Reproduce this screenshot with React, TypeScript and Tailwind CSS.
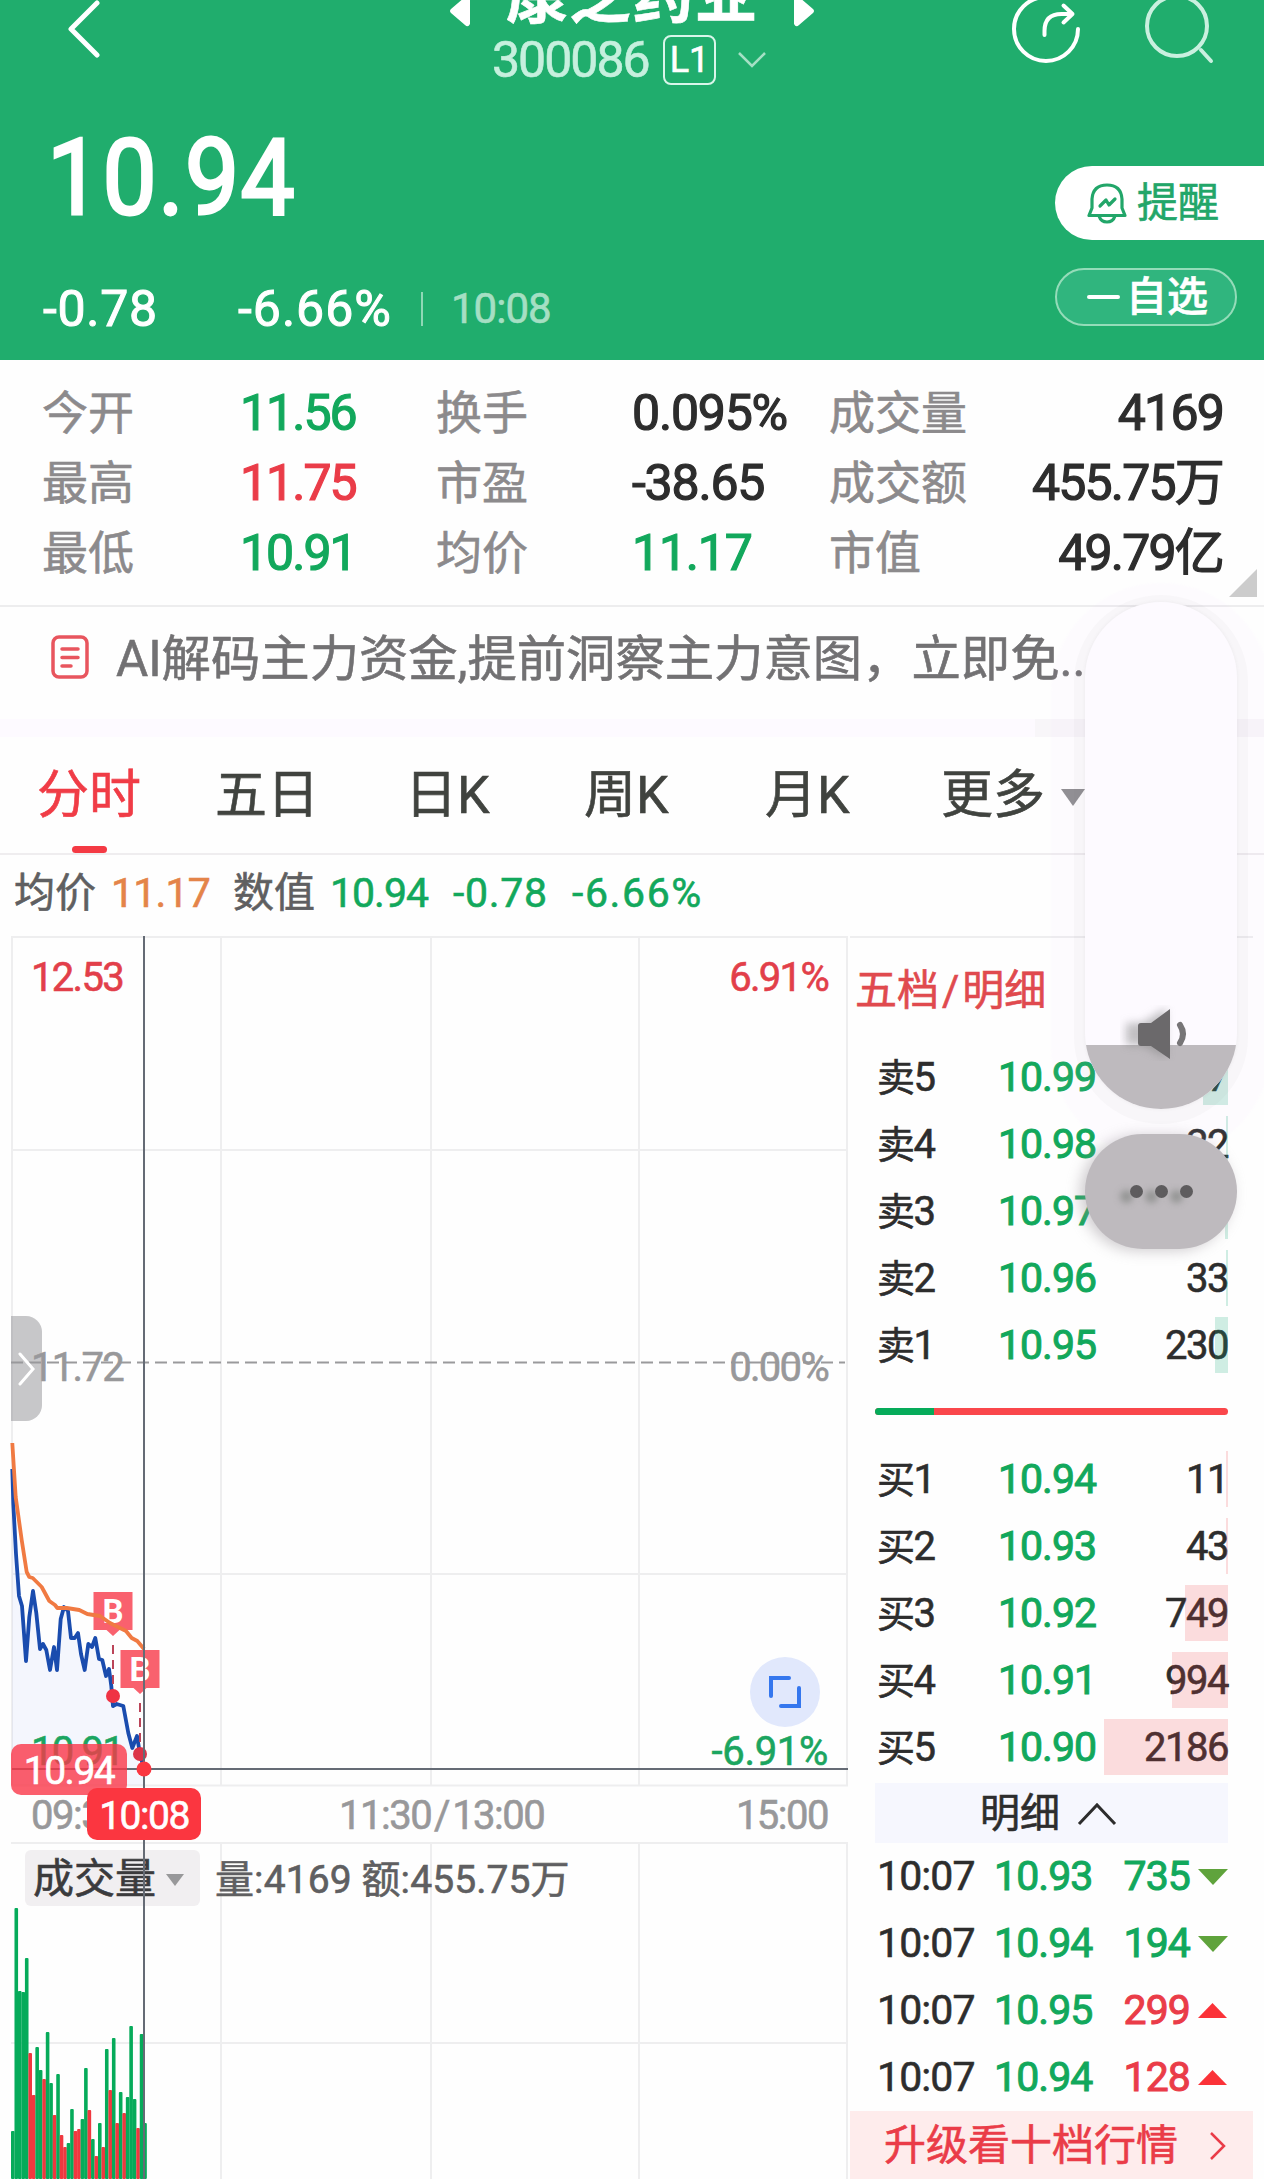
import type { ReactNode } from 'react';

const stats = [
  ['今开', '11.56', 'text-[#12a85c]', '换手', '0.095%', 'text-[#2d2d2d]', '成交量', '4169'],
  ['最高', '11.75', 'text-[#ea3c48]', '市盈', '-38.65', 'text-[#2d2d2d]', '成交额', '455.75万'],
  ['最低', '10.91', 'text-[#12a85c]', '均价', '11.17', 'text-[#12a85c]', '市值', '49.79亿'],
];

const sells = [
  { label: '卖5', price: '10.99', vol: '437', bar: 25 },
  { label: '卖4', price: '10.98', vol: '22', bar: 2 },
  { label: '卖3', price: '10.97', vol: '18', bar: 3 },
  { label: '卖2', price: '10.96', vol: '33', bar: 2 },
  { label: '卖1', price: '10.95', vol: '230', bar: 13 },
];

const buys = [
  { label: '买1', price: '10.94', vol: '11', bar: 2 },
  { label: '买2', price: '10.93', vol: '43', bar: 2 },
  { label: '买3', price: '10.92', vol: '749', bar: 43 },
  { label: '买4', price: '10.91', vol: '994', bar: 56 },
  { label: '买5', price: '10.90', vol: '2186', bar: 124 },
];

const ticks = [
  { price: '10.93', vol: '735', up: false },
  { price: '10.94', vol: '194', up: false },
  { price: '10.95', vol: '299', up: true },
  { price: '10.94', vol: '128', up: true },
];

// [height, rising] per minute since the open
const volumes: [number, number][] = [
  [48, 0], [271, 0], [188, 0], [187, 0], [221, 0], [126, 1], [84, 1], [132, 0], [109, 0], [100, 1],
  [147, 0], [96, 0], [64, 1], [105, 0], [44, 1], [32, 1], [36, 0], [70, 0], [48, 1], [50, 1],
  [60, 0], [111, 0], [69, 1], [40, 0], [23, 1], [56, 0], [32, 1], [130, 0], [89, 1], [141, 0],
  [56, 1], [87, 0], [66, 1], [82, 0], [153, 0], [80, 0], [51, 1], [145, 0], [56, 0],
];

const pricePoints =
  '12.3,1469 13.3,1504 16,1554 19,1596 22,1606 26,1661 29.3,1617 33,1591 36.3,1613 40,1649 43,1644 46.3,1650 50,1670 54,1647 57,1670 60.7,1619 64,1607 68,1611 71,1638 74.7,1638 78,1633 81,1654 84.7,1670 88.3,1644 92,1647 95.3,1638 99,1659 102.3,1660 106,1676 109,1669 111.3,1686 113,1706 116.7,1704 123.3,1706 128.3,1733 132.3,1748 137,1736 140,1754 144,1769';

const averagePoints =
  '12.3,1443 15.7,1497 21.7,1540 26.7,1572 29.3,1577 32.7,1578 41.7,1587 49.3,1601 55,1605 57.3,1608 66.7,1608 79.3,1610 87.3,1614 100,1616 110,1623 126,1631 131.7,1638 137.3,1641 144,1649';

function Header() {
  return (
    <header className="relative h-[360px] overflow-hidden bg-[#20ad6d] text-white">
      {/* Title bar */}
      <div className="flex h-[90px]">
        <svg className="h-[90px] w-[120px]" viewBox="0 0 120 90" fill="none" stroke="#fff" strokeWidth="5" strokeLinecap="round" strokeLinejoin="round">
          <path d="M97 3 71 29l26 26" />
        </svg>
        <div className="ml-[325px] flex w-[380px] flex-col items-center">
          <div className="-mt-[39px] flex h-[72px] w-full items-center justify-between pl-[5px] pr-[11px]">
            <svg className="mt-[28px] h-[32px] w-5" viewBox="0 0 20 32">
              <path d="M20 3v26q-2 4-5 1L1 18q-2-2 0-4L15 2q3-3 5 1" fill="#fff" />
            </svg>
            <span className="text-[62px] font-bold leading-[72px] tracking-[1px]">康芝药业</span>
            <svg className="mt-[28px] h-[32px] w-5" viewBox="0 0 20 32">
              <path d="M0 3v26q2 4 5 1l14-12q2-2 0-4L5 2Q2-1 0 3" fill="#fff" />
            </svg>
          </div>
          <div className="mt-[2px] flex h-[50px] w-full items-center pl-[47px]">
            <span className="w-[171px] text-[50px] leading-none tracking-[-2px] text-[#c6f0de]">300086</span>
            <span className="flex h-[50px] w-[53px] items-center justify-center rounded-lg border-2 border-[#d9f6ea] text-[36px] leading-none">
              L1
            </span>
            <svg className="ml-[21px] h-5 w-[30px]" viewBox="0 0 30 20" fill="none" stroke="#a5e0c5" strokeWidth="2.5">
              <path d="m2 3 13 13L28 3" />
            </svg>
          </div>
        </div>
        <svg className="ml-auto h-[90px] w-[264px]" viewBox="1000 0 264 90" fill="none" strokeWidth="4" strokeLinecap="round" strokeLinejoin="round">
          <path d="M1078 29A32 32 0 1 1 1046-3" stroke="#fff" />
          <path d="M1044.500 35v-4q0-17 17-17h11M1063.500 5.500l9 8.500-9 8.500" stroke="#fff" />
          <circle cx="1177" cy="26" r="30" stroke="#c9f0df" />
          <path d="m1201 50 10 11" stroke="#c9f0df" />
        </svg>
      </div>

      {/* Quote */}
      <div className="flex">
        <div className="flex-1">
          <div className="flex h-[172px] items-center pl-[47px] pt-[4px] text-[106px]">
            <span className="inline-block origin-left scale-x-[0.91] tracking-[1.5px] [-webkit-text-stroke:3px]">10.94</span>
          </div>
          <div className="flex h-[94px] items-center text-[50px] leading-none">
            <span className="w-[194px] pl-[43px] tracking-[0.7px] [-webkit-text-stroke:1px]">-0.78</span>
            <span className="w-[227px] pl-[44px] tracking-[1px] [-webkit-text-stroke:1px]">-6.66%</span>
            <span className="h-[34px] w-[2px] bg-[#8fd8b6]" />
            <span className="pl-[28px] text-[42px] tracking-[-1px] text-[#a5dfc3]">10:08</span>
          </div>
        </div>
        <div className="flex w-[209px] flex-col pt-[76px]">
          <button className="flex h-[74px] items-center rounded-l-full bg-white pl-8 text-[41px] text-[#22a669]">
            <svg className="mr-[10px] h-[42px] w-[40px]" viewBox="0 0 40 42" fill="none" stroke="currentColor" strokeWidth="3.200" strokeLinejoin="round">
              <path d="M2 33.500h36L35 26V17Q34 3 20 3T5 17v9zM12 34q2 6 8 6t8-6" />
              <path d="m13 24 6-6 3 5 6-6" strokeLinecap="round" />
            </svg>
            <span className="pt-px leading-none">提醒</span>
          </button>
          <button className="mt-7 flex h-[58px] w-[182px] items-center rounded-full border-2 border-[#94dcb9] bg-[#30b57e] pl-[30px] text-[41px] font-medium">
            <span className="mr-[6px] h-1 w-[33px] rounded-full bg-white" />
            <span className="leading-none">自选</span>
          </button>
        </div>
      </div>
    </header>
  );
}

function Stats() {
  return (
    <section className="relative flex h-[247px] flex-col border-b-2 border-[#ededee] pt-[18px] text-[50px] leading-none">
      {stats.map((s) => (
        <div key={s[0]} className="flex h-[70px] items-center">
          <span className="w-[197px] pl-[42px] text-[46px] text-[#8c8a8c]">{s[0]}</span>
          <span className={`w-[239px] pl-[43px] tracking-[-2px] [-webkit-text-stroke:1.2px] ${s[2]}`}>{s[1]}</span>
          <span className="w-[196px] text-[46px] text-[#8c8a8c]">{s[3]}</span>
          <span className={`w-[197px] tracking-[-1.2px] [-webkit-text-stroke:1.2px] ${s[5]}`}>{s[4]}</span>
          <span className="text-[46px] text-[#8c8a8c]">{s[6]}</span>
          <span className="flex flex-1 items-center justify-end pr-[41px] tracking-[-1.8px] text-[#2d2d2d] [-webkit-text-stroke:1.2px]">{s[7]}</span>
        </div>
      ))}
      <svg className="absolute bottom-[8px] right-[7px] h-7 w-7" viewBox="0 0 28 28">
        <path d="M28 0v28H0z" fill="#ccc" />
      </svg>
    </section>
  );
}

function Notice() {
  return (
    <section className="flex h-[130px] items-start border-b-[18px] border-[#fdfaff] pl-[51px] pt-[28px]">
      <svg className="h-[44px] w-[38px]" viewBox="0 0 38 44" fill="none" stroke="#e8555e" strokeWidth="3.500" strokeLinecap="round">
        <rect x="2" y="2" width="34" height="40" rx="6" />
        <path d="M11 14h16M11 22.500h16M11 31h9" />
      </svg>
      <p className="ml-[27px] whitespace-nowrap text-[49.35px] leading-[49px] text-[#727173]">
        AI解码主力资金,提前洞察主力意图，立即免..
      </p>
    </section>
  );
}

function Tabs() {
  return (
    <nav className="flex h-[118px] items-center border-b-2 border-[#efedef] text-[52px] leading-none text-[#40433f]">
      <div className="relative ml-[37px] flex h-full w-[178px] items-center pt-[2px] text-[#f03c46]">
        分时
        <span className="absolute bottom-0 left-[35px] h-[7px] w-[35px] rounded-full bg-[#f43a44]" />
      </div>
      <span className="w-[190px] pt-[2px]">五日</span>
      <span className="w-[179px] pt-[2px]">日K</span>
      <span className="w-[181px] pt-[2px]">周K</span>
      <span className="w-[176px] pt-[2px]">月K</span>
      <span className="pt-[2px]">更多</span>
      <svg className="ml-[16px] mt-1 h-5 w-6" viewBox="0 0 24 20">
        <path d="M0 2h24L12 19z" fill="#8d8d8f" />
      </svg>
    </nav>
  );
}

function Legend() {
  return (
    <div className="flex h-[81px] items-center pb-[4px] text-[41px] leading-none text-[#12a85c]">
      <span className="w-[111px] pl-[14px] text-[#5f5f61]">均价</span>
      <span className="w-[122px] tracking-[-0.8px] text-[#e48449]">11.17</span>
      <span className="w-[97px] text-[#5f5f61]">数值</span>
      <span className="w-[123px] tracking-[-1px]">10.94</span>
      <span className="w-[119px] tracking-[0.7px]">-0.78</span>
      <span className="tracking-[1.6px]">-6.66%</span>
    </div>
  );
}

function BuyMarker({ x, y }: { x: number; y: number }) {
  return (
    <g>
      <path d={`M${x - 19.5} ${y}h39v38h-13l-6.500 6-6.500-6h-13z`} fill="#f8505e" fillOpacity="0.9" />
      <text x={x} y={y + 31} textAnchor="middle" fontSize="33" fontWeight="700" fill="#fff">
        B
      </text>
    </g>
  );
}

function ChartCanvas() {
  return (
    <svg className="absolute left-0 top-0 h-[1243px] w-[850px]" viewBox="0 936 850 1243" fill="none">
      <g stroke="#eeeeef" strokeWidth="2">
        <path d="M11 937H848M11 1150H848M11 1574H848M11 1785.500H848M11 1843H848M11 2043H848" />
        <path d="M12 937V1786M221 937V1786M431 937V1786M639 937V1786M847 937V1786" />
        <path d="M221 1843V2179M431 1843V2179M639 1843V2179M847 1843V2179" />
      </g>
      <path d="M11 1362.500H845" stroke="#9a9a9c" strokeWidth="2" strokeDasharray="12 6" />
      <polygon points={`12,1785 ${pricePoints} 144,1785`} fill="#5b78f5" fillOpacity="0.06" />
      <polyline points={pricePoints} stroke="#1a4cae" strokeWidth="3.800" strokeLinejoin="round" />
      <path d="M113 1645v50M140 1703v50" stroke="#bb4458" strokeWidth="2" strokeDasharray="9 6" />
      <BuyMarker x={113} y={1592} />
      <BuyMarker x={140} y={1650} />
      <polyline points={averagePoints} stroke="#f07a42" strokeWidth="3.800" strokeLinejoin="round" />
      {volumes.map(([h, rising], i) => (
        <rect key={i} x={11 + i * 3.48} y={2179 - h} width={3.6} height={h} rx={1} fill={rising ? '#f0383f' : '#06ab5a'} />
      ))}
      <circle cx="113" cy="1696" r="7" fill="#ef3344" />
      <circle cx="140" cy="1754" r="7" fill="#dc3448" />
    </svg>
  );
}

function Crosshair() {
  return (
    <svg className="absolute left-0 top-0 h-[1243px] w-[850px]" viewBox="0 936 850 1243" fill="none">
      <path d="M144 936V2179M12 1769H848" stroke="#656b75" strokeWidth="2" />
      <circle cx="144" cy="1769" r="7.500" fill="#fb3640" />
    </svg>
  );
}

function Chart() {
  return (
    <div className="relative flex h-[1243px] w-[850px] flex-col text-[40px] leading-none">
      <ChartCanvas />
      <div className="relative flex h-[849px] flex-col justify-between pb-[13px] pl-[31px] pr-[22px] pt-[22px] tracking-[-1.7px]">
        <div className="flex justify-between text-[#e23f4a]">
          <span>12.53</span>
          <span>6.91%</span>
        </div>
        <div className="flex justify-between pt-[5px] text-[#98989a]">
          <span>11.72</span>
          <span>0.00%</span>
        </div>
        <div className="flex justify-between text-[#1ba560]">
          <span>10.91</span>
          <span className="tracking-[-0.3px]">-6.91%</span>
        </div>
      </div>
      <div className="relative flex h-[58px] items-center pl-[31px] pt-[4px] tracking-[-1.5px] text-[#98989a]">
        <span className="w-[308px]">09:30</span>
        <span className="flex-1">
          11:30<span className="px-[3px]">/</span>13:00
        </span>
        <span className="pr-[22px]">15:00</span>
      </div>
      <div className="relative flex items-center pl-[25px] pt-[7px]">
        <div className="flex h-[56px] w-[175px] items-center rounded-md bg-[#f1eff1] pl-[8px] pt-[3px] text-[41px] text-[#3b3b3d]">
          成交量
          <svg className="ml-[10px] h-3 w-[18px]" viewBox="0 0 18 12">
            <path d="M0 0h18L9 12z" fill="#98989a" />
          </svg>
        </div>
        <span className="ml-[15px] whitespace-nowrap pt-[4px] text-[39px] tracking-[0.1px] text-[#5f5f61]">量:4169 额:455.75万</span>
      </div>
      <Crosshair />
      {/* Crosshair tags */}
      <span className="absolute left-[11px] top-[808px] flex h-[51px] w-[116px] items-center justify-center rounded-[10px] bg-[#fa3748]/80 pt-[3px] text-[39px] tracking-[-1.5px] text-white">
        10.94
      </span>
      <span className="absolute left-[87px] top-[852px] flex h-[52px] w-[114px] items-center justify-center rounded-[10px] bg-[#fb3640] pt-[4px] text-[39px] tracking-[-1.5px] text-white">
        10:08
      </span>
      {/* Drawer handle */}
      <span className="absolute left-[11px] top-[380px] flex h-[105px] w-[31px] items-center justify-center rounded-r-[16px] bg-[#99999c]/55">
        <svg className="h-9 w-[18px]" viewBox="0 0 18 36" fill="none" stroke="#fff" strokeWidth="3" strokeLinecap="round">
          <path d="m2 3 13 15L2 33" />
        </svg>
      </span>
      <span className="absolute left-[750px] top-[721px] flex size-[70px] items-center justify-center rounded-full bg-[#e1e8fc]">
        <svg className="size-9" viewBox="0 0 36 36" fill="none" stroke="#3577ee" strokeWidth="4" strokeLinecap="round">
          <path d="M4 22V4h18M32 14v18H14" />
        </svg>
      </span>
    </div>
  );
}

type Level = { label: string; price: string; vol: string; bar: number };

function LevelRow({ level, tint }: { level: Level; tint: string }) {
  return (
    <div className="relative flex h-[67px] items-center pl-[2px] pt-[2px] text-[40px] leading-none tracking-[-1.5px] text-[#2d2d2d]">
      <span className="w-[121px]">
        <span className="text-[38px]">{level.label[0]}</span>
        {level.label[1]}
      </span>
      <span className="text-[41px] tracking-[-1px] text-[#12a85c] [-webkit-text-stroke:1px]">{level.price}</span>
      <span className="flex-1 text-right">{level.vol}</span>
      <span className={`absolute right-0 top-[6px] h-[56px] ${tint}`} style={{ width: level.bar }} />
    </div>
  );
}

function Row({ children }: { children: ReactNode }) {
  return <div className="flex h-[67px] items-center pl-[2px] text-[41px] leading-none tracking-[-0.9px]">{children}</div>;
}

function OrderBook() {
  return (
    <aside className="flex w-[403px] flex-col border-t-2 border-[#eeeeef]">
      <h2 className="h-[105px] whitespace-nowrap pl-[5px] pt-[32px] text-[42px] leading-none text-[#e04a4e]">
        五档<span className="px-[3px]">/</span>明细
      </h2>
      <div className="ml-[25px] w-[353px]">
        {sells.map((s) => (
          <LevelRow key={s.label} level={s} tint="bg-[#12a87a]/20" />
        ))}
        <div className="my-[30px] flex h-[7px] overflow-hidden rounded-full bg-[#fa474b]">
          <span className="w-[59px] bg-[#06ab5a]" />
        </div>
        {buys.map((b) => (
          <LevelRow key={b.label} level={b} tint="bg-[#ee4046]/18" />
        ))}
        <div className="mt-[3px] flex h-[60px] items-center bg-[#f6f7fe] pl-[105px] pt-[2px] text-[40px] leading-none text-[#2d2d2d]">
          明细
          <svg className="ml-[17px] h-6 w-10" viewBox="0 0 40 24" fill="none" stroke="currentColor" strokeWidth="3">
            <path d="M2 22 20 3l18 19" />
          </svg>
        </div>
        {ticks.map((t, i) => (
          <Row key={i}>
            <span className="w-[117px] text-[#2d2d2d]">10:07</span>
            <span className="text-[#12a85c] [-webkit-text-stroke:1px]">{t.price}</span>
            <span className={`flex-1 pr-[8px] text-right [-webkit-text-stroke:1px] ${t.up ? 'text-[#ea3c48]' : 'text-[#12a85c]'}`}>{t.vol}</span>
            <svg className="h-4 w-[30px]" viewBox="0 0 30 16">
              {t.up ? <path d="M0 15h29L14.500 0z" fill="#fb3238" /> : <path d="M0 0h30L15 16z" fill="#5fa33c" />}
            </svg>
          </Row>
        ))}
      </div>
      <div className="flex flex-1 items-center justify-between bg-[#feecec] pl-[34px] pr-[27px] pt-px text-[42px] leading-none text-[#ea3c48]">
        升级看十档行情
        <svg className="h-7 w-4" viewBox="0 0 16 28" fill="none" stroke="currentColor" strokeWidth="2.500">
          <path d="m1 1 13 13L1 27" />
        </svg>
      </div>
    </aside>
  );
}

// System volume panel floating above the page
function VolumeOverlay() {
  return (
    <div className="absolute left-[1085px] top-[602px] w-[152px]">
      <span className="absolute -left-[50px] top-[117px] h-[18px] w-[229px] bg-[#f8f6f9]" />
      <div className="relative flex h-[507px] flex-col justify-end overflow-hidden rounded-full bg-[#fdfaff] shadow-[0_0_3px_1px_rgba(90,100,100,0.05),0_4px_0_11px_rgba(110,120,120,0.035),0_15px_2px_34px_rgba(235,190,255,0.05)]">
        <div className="h-[64px] bg-[#bebabe]" />
        <svg className="absolute bottom-[48px] left-[35px] h-[56px] w-[80px]" viewBox="0 0 80 56">
          <path d="M6 18h16L46 3v50L22 40H6z" fill="#777" fillOpacity="0.45" className="blur-[4px]" />
          <path d="M21 18h10L50 4v50L31 41H21q-3 0-3-3V21q0-3 3-3" fill="#6b696b" />
          <path d="M60 20q6 9 0 18" fill="none" stroke="#777577" strokeWidth="6" strokeLinecap="round" />
        </svg>
      </div>
      <div className="relative mt-[25px] flex h-[115px] items-center justify-center gap-3 rounded-full bg-[#bebabe] shadow-[-5px_2px_14px_rgba(150,145,150,0.45)]">
        <span className="size-[13px] rounded-full bg-[#5e5c5e] shadow-[-10px_5px_6px_rgba(110,115,110,0.5)]" />
        <span className="size-[13px] rounded-full bg-[#5e5c5e] shadow-[-10px_5px_6px_rgba(110,115,110,0.5)]" />
        <span className="size-[13px] rounded-full bg-[#5e5c5e] shadow-[-10px_5px_6px_rgba(110,115,110,0.5)]" />
      </div>
    </div>
  );
}

export default function App() {
  return (
    <div className="relative h-[2179px] w-[1264px] overflow-hidden bg-[#fefefe] font-['Roboto','Noto_Sans_CJK_SC',sans-serif] [-webkit-text-stroke:0.6px]">
      <Header />
      <Stats />
      <Notice />
      <Tabs />
      <Legend />
      <main className="flex h-[1243px]">
        <Chart />
        <OrderBook />
      </main>
      <VolumeOverlay />
    </div>
  );
}
